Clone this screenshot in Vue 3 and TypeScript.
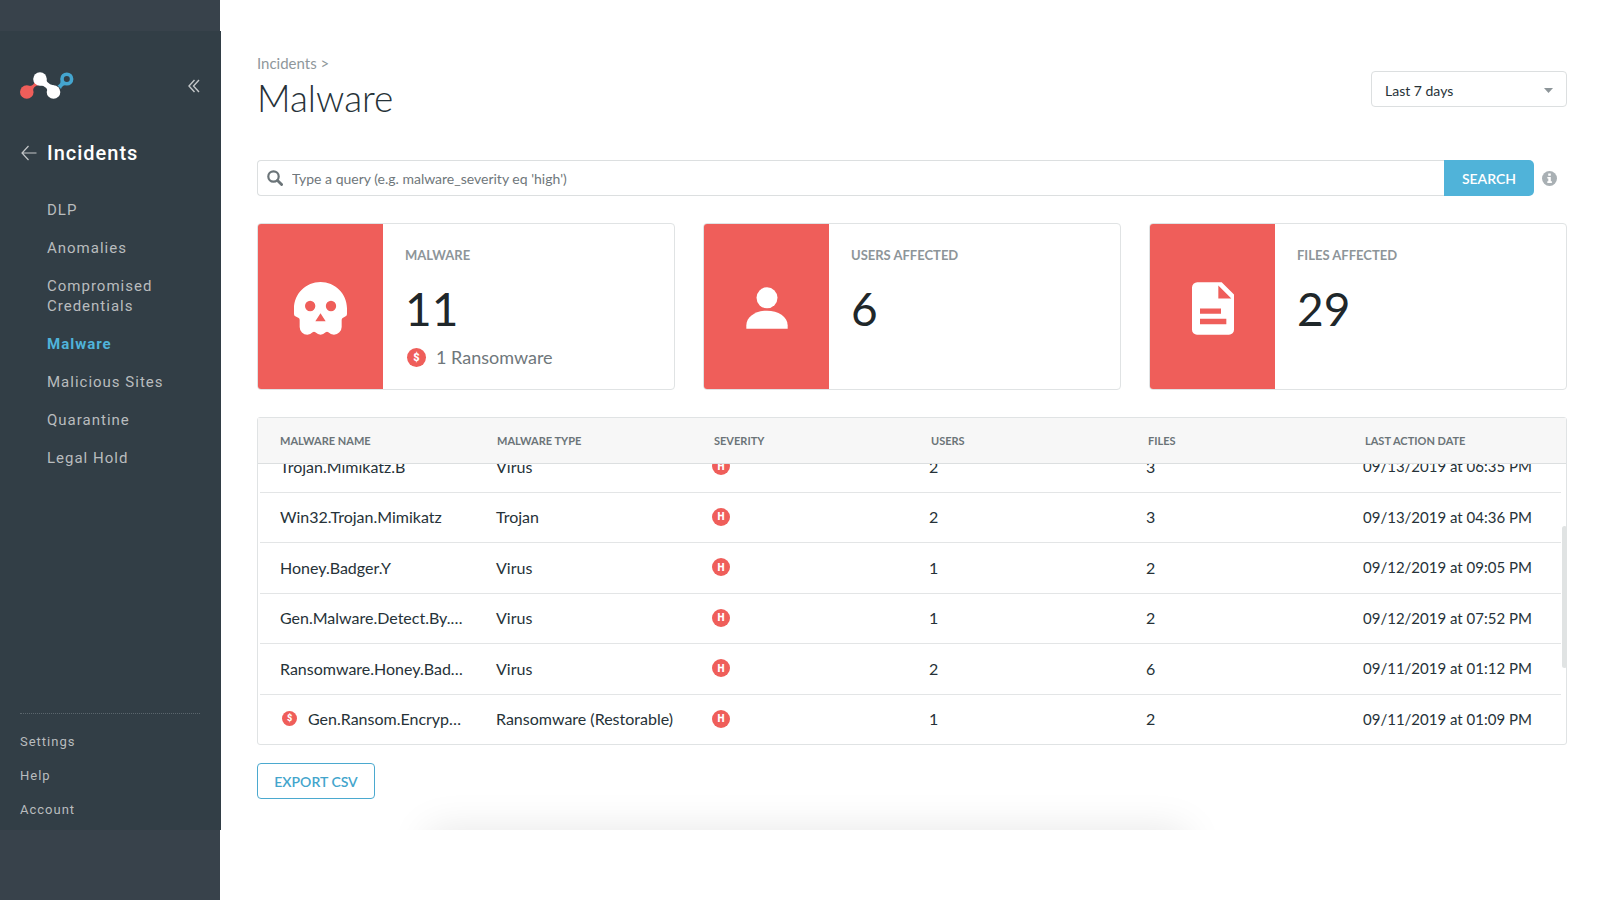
<script setup lang="ts">
import { onMounted, ref } from 'vue'

interface NavItem {
  label: string
  active?: boolean
}

interface MalwareRow {
  name: string
  type: string
  severity: string
  users: number
  files: number
  date: string
  ransom?: boolean
}

interface StatCard {
  icon: 'skull' | 'user' | 'file'
  label: string
  value: number
  note?: string
}

const navItems: NavItem[] = [
  { label: 'DLP' },
  { label: 'Anomalies' },
  { label: 'Compromised Credentials' },
  { label: 'Malware', active: true },
  { label: 'Malicious Sites' },
  { label: 'Quarantine' },
  { label: 'Legal Hold' },
]

const footerItems: string[] = ['Settings', 'Help', 'Account']

const cards: StatCard[] = [
  { icon: 'skull', label: 'MALWARE', value: 11, note: '1 Ransomware' },
  { icon: 'user', label: 'USERS AFFECTED', value: 6 },
  { icon: 'file', label: 'FILES AFFECTED', value: 29 },
]

const columns: string[] = ['MALWARE NAME', 'MALWARE TYPE', 'SEVERITY', 'USERS', 'FILES', 'LAST ACTION DATE']

const rows: MalwareRow[] = [
  { name: 'Trojan.Mimikatz.B', type: 'Virus', severity: 'H', users: 2, files: 3, date: '09/13/2019 at 06:35 PM' },
  { name: 'Win32.Trojan.Mimikatz', type: 'Trojan', severity: 'H', users: 2, files: 3, date: '09/13/2019 at 04:36 PM' },
  { name: 'Honey.Badger.Y', type: 'Virus', severity: 'H', users: 1, files: 2, date: '09/12/2019 at 09:05 PM' },
  { name: 'Gen.Malware.Detect.By.…', type: 'Virus', severity: 'H', users: 1, files: 2, date: '09/12/2019 at 07:52 PM' },
  { name: 'Ransomware.Honey.Bad…', type: 'Virus', severity: 'H', users: 2, files: 6, date: '09/11/2019 at 01:12 PM' },
  { name: 'Gen.Ransom.Encryp…', type: 'Ransomware (Restorable)', severity: 'H', users: 1, files: 2, date: '09/11/2019 at 01:09 PM', ransom: true },
]

const query = ref('')
const range = ref('Last 7 days')
const scroller = ref<HTMLElement | null>(null)

onMounted(() => {
  if (scroller.value) scroller.value.scrollTop = scroller.value.scrollHeight
})
</script>

<template>
  <div class="page">
    <div class="shell">
      <aside class="sidebar">
        <div class="brand">
          <svg class="logo" viewBox="0 0 54 27" aria-hidden="true">
            <path d="M9 14 Q14 14 15 9 L19 13 Q13 14 13 19 Z" fill="#ef5e5a" />
            <circle cx="6.8" cy="20" r="6.8" fill="#ef5e5a" />
            <path d="M26 4 Q25 12 34 13.500 L28 23 Q29 14 19 13 Z" fill="#fff" />
            <circle cx="20" cy="7" r="6.8" fill="#fff" />
            <circle cx="33.5" cy="20" r="6.8" fill="#fff" />
            <path d="M37.500 13.500 Q41 12 41 7 L47 12.500 Q42 13 41 17 Z" fill="#44a5cf" />
            <circle cx="46.8" cy="7" r="4.800" fill="#323e46" stroke="#44a5cf" stroke-width="3.600" />
          </svg>
          <button class="collapse" type="button" aria-label="Collapse menu">
            <svg viewBox="0 0 12 14" aria-hidden="true">
              <path d="M6.5 1 L1 7 L6.5 13 M11 1 L5.5 7 L11 13" fill="none" stroke="#c3c6c8" stroke-width="1.4" />
            </svg>
          </button>
        </div>

        <a class="section" href="#">
          <svg viewBox="0 0 16 16" aria-hidden="true">
            <path d="M7.5 1 L1 8 L7.5 15 M1 8 H15.5" fill="none" stroke="#c3c6c8" stroke-width="1.2" />
          </svg>
          <span>Incidents</span>
        </a>

        <nav class="nav">
          <a v-for="item in navItems" :key="item.label" href="#" :class="{ active: item.active }">{{ item.label }}</a>
        </nav>

        <nav class="footer-nav">
          <a v-for="item in footerItems" :key="item" href="#">{{ item }}</a>
        </nav>
      </aside>

      <main class="main">
        <header class="head">
          <div>
            <a class="crumb" href="#">Incidents &gt;</a>
            <h1>Malware</h1>
          </div>
          <div class="range">
            <select v-model="range" aria-label="Time range">
              <option>Last 7 days</option>
            </select>
            <svg viewBox="0 0 9 5" aria-hidden="true"><path d="M0 0 H9 L4.500 5 Z" fill="#8d9599" /></svg>
          </div>
        </header>

        <form class="search" @submit.prevent>
          <label class="field">
            <svg viewBox="0 0 16 16" aria-hidden="true">
              <circle cx="6.5" cy="6.5" r="5.2" fill="none" stroke="#6b7478" stroke-width="2.2" />
              <path d="M10.5 10.5 L14.6 14.6" stroke="#6b7478" stroke-width="2.8" stroke-linecap="round" />
            </svg>
            <input v-model="query" type="text" aria-label="Query" placeholder="Type a query (e.g. malware_severity eq 'high')" />
          </label>
          <button class="submit" type="submit">SEARCH</button>
          <button class="info" type="button" aria-label="Query help">
            <svg viewBox="0 0 15 15" aria-hidden="true">
              <circle cx="7.5" cy="7.5" r="7.5" fill="#a9b0b4" />
              <path d="M6.2 2.6 H8.8 V4.7 H6.2 Z M5.3 6 H8.8 V10.3 H9.9 V12 H5.3 V10.3 H6.3 V7.6 H5.3 Z" fill="#fff" />
            </svg>
          </button>
        </form>

        <section class="cards">
          <article v-for="card in cards" :key="card.label" class="card">
            <div class="tile">
              <svg v-if="card.icon === 'skull'" class="skull" viewBox="132 215 159 159" aria-hidden="true">
                <path
                  fill="#fff"
                  fill-rule="evenodd"
                  d="M211.5 215 C255 215 291 250 291 294 V311 Q291 316 287 318 L278 323 Q275 325 275 329 V350 A23.500 23.500 0 0 1 252 373 Q242 373 235 366 Q231 363 227 366 Q212 380 196 366 Q192 363 188 366 Q181 373 172 373 A23 23 0 0 1 149 350 V329 Q149 325 146 323 L136 318 Q132 316 132 311 V294 C132 250 168 215 211.500 215 Z M165 287 a15.500 16 0 1 0 31 0 a15.500 16 0 1 0 -31 0 Z M227.500 287 a15.500 16 0 1 0 31 0 a15.500 16 0 1 0 -31 0 Z M211.500 309 L227 333 H196 Z"
                />
              </svg>
              <svg v-else-if="card.icon === 'user'" class="user" viewBox="165 230 128 128" aria-hidden="true">
                <circle cx="229" cy="263" r="32" fill="#fff" />
                <path fill="#fff" d="M166 357 V347 C166 320 195 302 229 302 S292 320 292 347 V357 Z" />
              </svg>
              <svg v-else class="file" viewBox="183 215 126 158" aria-hidden="true">
                <path
                  fill="#fff"
                  fill-rule="evenodd"
                  d="M199 215 H272 L309 252 V358 A15 15 0 0 1 294 373 H198 A15 15 0 0 1 183 358 V231 A16 16 0 0 1 199 215 Z M262 225 V264 H301 Z M207 294 H270 V310 H207 Z M207 325 H286 V341 H207 Z"
                />
              </svg>
            </div>
            <div class="stat">
              <h2>{{ card.label }}</h2>
              <p class="value">{{ card.value }}</p>
              <p v-if="card.note" class="note"><span class="coin">$</span>{{ card.note }}</p>
            </div>
          </article>
        </section>

        <section class="list">
          <div ref="scroller" class="scroller">
            <table>
              <thead>
                <tr>
                  <th v-for="column in columns" :key="column" scope="col">{{ column }}</th>
                </tr>
              </thead>
              <tbody>
                <tr v-for="row in rows" :key="row.name">
                  <td><span class="cell"><span v-if="row.ransom" class="coin small">$</span>{{ row.name }}</span></td>
                  <td>{{ row.type }}</td>
                  <td><span class="cell"><span class="severity">{{ row.severity }}</span></span></td>
                  <td>{{ row.users }}</td>
                  <td>{{ row.files }}</td>
                  <td class="date">{{ row.date }}</td>
                </tr>
              </tbody>
            </table>
          </div>
          <div class="thumb"></div>
        </section>

        <button class="export" type="button">EXPORT CSV</button>
        <div class="glow"></div>
      </main>
    </div>
  </div>
</template>

<style>
body {
  margin: 0;
}
</style>

<style scoped>
* {
  box-sizing: border-box;
}

.page {
  display: flex;
  flex-direction: column;
  min-height: 100vh;
  padding: 31px 0 70px;
  background: linear-gradient(to right, #38424b 220px, #fff 220px);
  font-family: Lato, 'Liberation Sans', sans-serif;
  font-size: 16px;
  color: #263238;
}

a {
  color: inherit;
  text-decoration: none;
}

svg {
  display: block;
}

button {
  padding: 0;
  border: 0;
  background: none;
  font: inherit;
}

h1,
h2,
p {
  margin: 0;
}

.shell {
  display: flex;
  flex: 1;
}

/* Sidebar */
.sidebar {
  display: flex;
  flex: none;
  flex-direction: column;
  width: 221px;
  padding: 41px 21px 10px 20px;
  background: #323e46;
  color: #b9bcbe;
  font-family: Roboto, 'Liberation Sans', sans-serif;
  letter-spacing: 1px;
}

.brand {
  display: flex;
  align-items: center;
  justify-content: space-between;
}

.logo {
  width: 54px;
  height: 27px;
}

.collapse svg {
  width: 12px;
  height: 14px;
}

.section {
  display: flex;
  gap: 10px;
  align-items: center;
  margin-top: 42px;
  padding-left: 1px;
  color: #fff;
  font-size: 20px;
  font-weight: 500;
  line-height: 24px;
}

.section svg {
  width: 16px;
  height: 16px;
}

.nav {
  display: flex;
  flex-direction: column;
  gap: 18px;
  margin: 35px 20px 0 27px;
  font-size: 15px;
  line-height: 20px;
}

.nav .active {
  color: #4fb3da;
  font-weight: 700;
}

.footer-nav {
  display: flex;
  flex-direction: column;
  gap: 14px;
  margin-top: auto;
  padding-top: 18px;
  border-top: 1px dotted #5b666d;
  font-size: 13px;
  line-height: 20px;
}

/* Main column */
.main {
  position: relative;
  flex: 1;
  min-width: 0;
  padding: 21px 33px 31px 36px;
  overflow: hidden;
}

.head {
  display: flex;
  align-items: flex-start;
  justify-content: space-between;
}

.crumb {
  display: block;
  color: #8f979b;
  font-size: 15px;
  line-height: 22px;
}

h1 {
  color: #263238;
  font-size: 37px;
  font-weight: 300;
  line-height: 48px;
}

.range {
  position: relative;
  width: 196px;
  margin-top: 19px;
}

.range select {
  width: 100%;
  height: 36px;
  padding: 2px 13px 0;
  border: 1px solid #dcdfe0;
  border-radius: 4px;
  appearance: none;
  background: #fff;
  color: #263238;
  font: inherit;
  font-size: 14px;
}

.range svg {
  position: absolute;
  top: 17px;
  right: 14px;
  width: 9px;
  height: 5px;
  pointer-events: none;
}

.search {
  display: flex;
  align-items: center;
  margin: 38px 10px 0 0;
}

.field {
  display: flex;
  flex: 1;
  gap: 9px;
  align-items: center;
  height: 36px;
  padding: 0 9px;
  border: 1px solid #dcdfe0;
  border-right: 0;
  border-radius: 4px 0 0 4px;
}

.field svg {
  width: 16px;
  height: 16px;
}

.field input {
  flex: 1;
  padding: 0;
  border: 0;
  outline: 0;
  background: none;
  color: inherit;
  font: inherit;
  font-size: 14px;
}

.field input::placeholder {
  color: #6f777b;
}

.submit {
  width: 90px;
  height: 36px;
  border-radius: 0 5px 5px 0;
  background: #50b3d9;
  color: #fff;
  font-size: 14px;
  font-weight: 600;
}

.info {
  margin-left: 8px;
}

.info svg {
  width: 15px;
  height: 15px;
}

/* Stat cards */
.cards {
  display: grid;
  grid-template-columns: repeat(3, 1fr);
  gap: 28px;
  margin-top: 27px;
}

.card {
  display: flex;
  height: 167px;
  overflow: hidden;
  border: 1px solid #e0e3e4;
  border-radius: 4px;
}

.tile {
  display: flex;
  flex: none;
  align-items: center;
  justify-content: center;
  width: 125px;
  padding-top: 3px;
  background: #ef5e5a;
}

.skull {
  width: 53px;
  height: 53px;
}

.user {
  width: 42px;
  height: 42px;
}

.file {
  width: 42px;
  height: 53px;
}

.stat {
  padding: 20px 22px;
}

.stat h2 {
  color: #8d9599;
  font-size: 13px;
  font-weight: 700;
  line-height: 22px;
}

.value {
  margin-top: 15px;
  color: #20272a;
  font-size: 46px;
  line-height: 56px;
}

.note {
  display: flex;
  gap: 10px;
  align-items: center;
  margin-top: 8px;
  padding-left: 2px;
  color: #6f777b;
  font-size: 18px;
  line-height: 24px;
}

.coin,
.severity {
  display: inline-flex;
  flex: none;
  align-items: center;
  justify-content: center;
  border-radius: 50%;
  background: #ef5e5a;
  color: #fff;
  font-family: Roboto, 'Liberation Sans', sans-serif;
  font-weight: 900;
}

.coin {
  width: 19px;
  height: 19px;
  font-size: 11px;
  line-height: 11px;
}

.coin.small {
  width: 15px;
  height: 15px;
  margin: 0 11px 0 2px;
  font-size: 9px;
}

.severity {
  width: 18px;
  height: 18px;
  padding-top: 1px;
  font-size: 10px;
  line-height: 10px;
}

/* Incident list */
.list {
  position: relative;
  margin-top: 27px;
  border: 1px solid #e0e3e4;
  border-radius: 3px;
}

.scroller {
  height: 326px;
  overflow-y: auto;
  scrollbar-width: none;
}

table {
  width: 100%;
  height: 349px;
  border-spacing: 0;
  table-layout: fixed;
}

th {
  position: sticky;
  top: 0;
  width: 217px;
  height: 46px;
  padding: 0 0 0 22px;
  border-bottom: 1px solid #dcdfe0;
  background: #f7f7f7;
  color: #6b7478;
  font-size: 11px;
  font-weight: 700;
  text-align: left;
}

th:last-child {
  width: auto;
}

tbody tr + tr {
  background: linear-gradient(#e3e5e6, #e3e5e6) 2px 0 / calc(100% - 7px) 1px no-repeat;
}

td {
  padding: 0 0 0 20px;
  white-space: nowrap;
}

td:first-child {
  padding-left: 22px;
}

td:nth-child(2) {
  padding-left: 21px;
}

.date {
  font-size: 15px;
}

.cell {
  display: flex;
  align-items: center;
}

.thumb {
  position: absolute;
  top: 33%;
  right: -1px;
  width: 5px;
  height: 142px;
  border-radius: 3px;
  background: #e0e3e3;
}

.export {
  width: 118px;
  height: 36px;
  margin-top: 18px;
  border: 1px solid #4ba9cf;
  border-radius: 4px;
  color: #43a5cc;
  font-size: 14px;
  font-weight: 600;
}

.glow {
  position: absolute;
  top: 100%;
  right: 30%;
  left: 15%;
  height: 60px;
  box-shadow: 0 0 40px rgba(0, 0, 0, 0.1);
}
</style>
